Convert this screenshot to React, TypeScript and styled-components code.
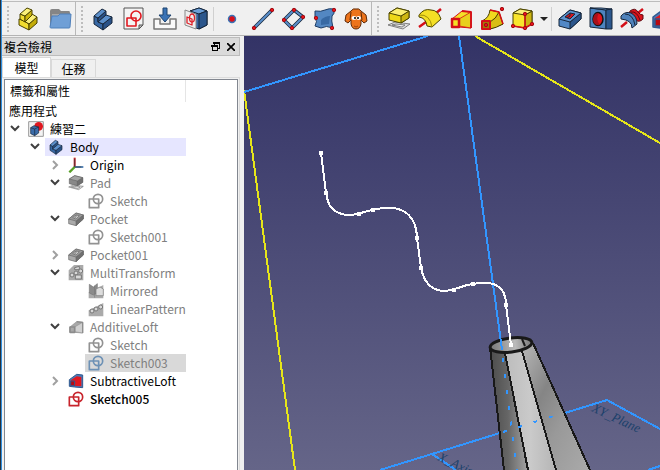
import React, { ReactNode } from 'react';
import styled, { createGlobalStyle } from 'styled-components';

const GlobalStyle = createGlobalStyle`
  * { box-sizing: border-box; }
  body { margin: 0; overflow: hidden; }
  button { font: inherit; color: inherit; border: 0; padding: 0; background: none; }
`;

const Window = styled.div`
  display: flex;
  flex-direction: column;
  height: 100vh;
  overflow: hidden;
  border-left: 1px solid #26313c;
  background: #f0f0f0;
  color: #000;
  font: 12px/18px "Noto Sans CJK TC", "Noto Sans", sans-serif;
`;

const Frame = styled.div`
  display: flex;
  flex-direction: column;
  flex: 1;
  min-height: 0;
  border-left: 1px solid #2f8fe0;
`;

const ToolbarArea = styled.header`
  display: flex;
  flex: none;
  height: 36px;
  padding-top: 1px;
  border-bottom: 1px solid #b4b4b4;
`;

const ToolGroup = styled.div<{ $last?: boolean }>`
  display: flex;
  align-items: center;
  flex: ${p => (p.$last ? '1' : 'none')};
  min-width: 0;
  overflow: hidden;
  border-top: 1px solid #bcbcbc;
  border-right: ${p => (p.$last ? '0' : '1px solid #b8b8b8')};
`;

const Grip = styled.span`
  flex: none;
  width: 2px;
  height: 26px;
  margin: 0 4px 0 5px;
  background: repeating-linear-gradient(#bdbdbd 0 2px, transparent 2px 4px);
`;

const ToolButton = styled.button`
  display: grid;
  place-items: center;
  flex: none;
  width: 31px;
  height: 30px;
`;

const MenuArrow = styled.button`
  display: grid;
  place-items: center;
  flex: none;
  width: 11px;
  height: 30px;
`;

const Separator = styled.span`
  flex: none;
  width: 1px;
  height: 24px;
  margin: 0 2px;
  background: #d0d0d0;
`;

const Workspace = styled.div`
  display: grid;
  grid-template-columns: 242px minmax(0, 1fr);
  flex: 1;
  min-height: 0;
`;

const Dock = styled.aside`
  display: flex;
  flex-direction: column;
  min-height: 0;
  padding: 1px 4px 0 0;
`;

const DockTitle = styled.div`
  display: flex;
  align-items: center;
  height: 19px;
  padding: 0 0 0 2px;
  border: 1px solid #bcbcbc;
  border-left: 0;
  background: #dadada;
`;

const DockName = styled.h1`
  flex: 1;
  margin: 0;
  font-size: 12px;
  font-weight: 400;
`;

const DockButton = styled.button`
  display: grid;
  place-items: center;
  width: 16px;
  height: 16px;
`;

const TabBar = styled.div`
  display: flex;
  align-items: flex-end;
  height: 21px;
`;

const Tab = styled.button<{ $active?: boolean }>`
  width: ${p => (p.$active ? '49px' : '45px')};
  height: ${p => (p.$active ? '20px' : '18px')};
  border: 1px solid #d9d9d9;
  border-bottom: 0;
  background: ${p => (p.$active ? '#fff' : '#f0f0f0')};
  line-height: 17px;
`;

const TabPage = styled.div`
  display: flex;
  flex: 1;
  min-height: 0;
  padding: 1px 1px 0 2px;
  border: 1px solid #dcdcdc;
  border-width: 1px 1px 0 0;
`;

const TreeView = styled.div`
  flex: 1;
  min-width: 0;
  overflow: hidden;
  border: 1px solid #828790;
  border-bottom: 0;
  background: #fff;
`;

const ColumnHeader = styled.div`
  width: 181px;
  height: 22px;
  padding-left: 5px;
  border-right: 1px solid #e5e5e5;
  line-height: 22px;
`;

const RootLabel = styled.div`
  height: 18px;
  padding-left: 4px;
`;

const Tree = styled.ul`
  width: 181px;
  margin: 0;
  padding: 0;
  list-style: none;
`;

const TreeRow = styled.li<{ $depth: number }>`
  display: flex;
  height: 18px;
  padding-left: ${p => p.$depth * 20}px;
`;

const Expander = styled.button`
  display: grid;
  place-items: center;
  flex: none;
  width: 20px;
  height: 18px;
`;

const Indent = styled.span`
  flex: none;
  width: 20px;
`;

type Tone = 'normal' | 'muted' | 'strong';
type Mark = 'none' | 'active' | 'selected';

const Item = styled.span<{ $tone: Tone; $mark: Mark }>`
  display: flex;
  align-items: center;
  flex: 1;
  gap: 6px;
  padding-left: 3px;
  white-space: nowrap;
  background: ${p => ({ none: 'transparent', active: '#e6e6ff', selected: '#d9d9d9' })[p.$mark]};
  color: ${p => (p.$tone === 'muted' ? '#808080' : '#000')};
  font-weight: ${p => (p.$tone === 'strong' ? 500 : 400)};
`;

const Viewport = styled.main`
  min-width: 0;
  min-height: 0;
  overflow: hidden;
  background: linear-gradient(#333366, #656588);
`;

const Scene = styled.svg`
  display: block;
  width: 100%;
  height: 100%;
`;

/* ---------- icons ---------- */

const Svg = ({ size = 24, children }: { size?: number; children: ReactNode }) => (
  <svg width={size} height={size} viewBox="0 0 24 24" strokeLinejoin="round" aria-hidden="true">
    {children}
  </svg>
);

const RED = '#d40f18';
const NAVY = '#16263b';

const PartIcon = () => (
  <Svg>
    <g stroke="#4a4300" strokeWidth="1">
      <path d="M2 12 7 14 12 17V23L2 18Z" fill="#f1dc30" />
      <path d="M12 17 20 10V16L12 23Z" fill="#c4ac08" />
      <path d="M7 14 15 7 20 10 12 17Z" fill="#fbf07a" />
      <path d="M3 7 8 9V15L3 12Z" fill="#f1dc30" />
      <path d="M8 9 15 3V8L8 15Z" fill="#cdb60f" />
      <path d="M3 7 10 1 15 3 8 9Z" fill="#fbf07a" />
    </g>
  </Svg>
);

const FolderIcon = () => (
  <Svg>
    <path d="M2 4Q2 2 4 2H11L13 4H21Q22 4 22 6V19H2Z" fill="#858585" />
    <path d="M4 7H21V18H4Z" fill="#a8a8a8" />
    <path d="M4 9H10L12 7H23L22 20Q22 21 21 21H3Q2 21 2 20Z" fill="#6f9fd6" stroke="#4f80bb" />
  </Svg>
);

const BodyIcon = ({ size = 24 }: { size?: number }) => (
  <Svg size={size}>
    <g stroke={NAVY} strokeWidth="1">
      <path d="M3 9 7 11V15L12 17V23L3 17Z" fill="#3767a3" />
      <path d="M7 11 15 4V8L7 15Z" fill="#2a5288" />
      <path d="M12 17 21 10V16L12 23Z" fill="#2a5288" />
      <path d="M7 15 15 8 21 10 12 17Z" fill="#5b8fcb" />
      <path d="M3 9 11 2 15 4 7 11Z" fill="#5b8fcb" />
    </g>
  </Svg>
);

const SketchShape = ({ color, width = 2 }: { color: string; width?: number }) => (
  <g fill="none" stroke={color} strokeWidth={width}>
    <path d="M2 9H16V22H2Z" /><circle cx="15" cy="9" r="7" />
  </g>
);

const NewSketchIcon = () => (
  <Svg>
    <path d="M2 1H21V18L17 22H2Z" fill="#f4f4f4" stroke="#555" />
    <path d="M21 18H17V22Z" fill="#bbb" stroke="#555" />
    <path d="M5 11H14V19H5Z" fill="none" stroke="#e01820" strokeWidth="1.600" />
    <circle cx="14" cy="9" r="5" fill="none" stroke="#e01820" strokeWidth="1.600" />
  </Svg>
);

const ImportIcon = () => (
  <Svg>
    <path d="M1 12H7V17H17V12H23V22H1Z" fill="#fafafa" stroke="#777" strokeWidth="1.500" />
    <path d="M10 1H14V8H18L12 15 6 8H10Z" fill="#3972b5" stroke="#1d436f" />
  </Svg>
);

const MapSketchIcon = () => (
  <Svg>
    <path d="M6 4 15 1 23 4V18L15 22 6 19Z" fill="#3465a4" stroke={NAVY} />
    <path d="M6 4 15 7 23 4 15 1Z" fill="#6b9ed7" stroke={NAVY} />
    <path d="M15 7 23 4V18L15 22Z" fill="#2b568c" stroke={NAVY} />
    <path d="M1 3 12 7V22L1 18Z" fill="#eee" stroke="#888" />
    <path d="M3 10 8 12V18L3 16Z" fill="none" stroke="#dd222a" strokeWidth="1.300" />
    <ellipse cx="8" cy="11" rx="2.500" ry="4" fill="none" stroke="#dd222a" strokeWidth="1.300" />
  </Svg>
);

const Dot = ({ x, y }: { x: number; y: number }) => (
  <circle cx={x} cy={y} r="1.700" fill="#e8111a" stroke="#a00d13" />
);

const PointIcon = () => (
  <Svg><circle cx="12" cy="12" r="3.500" fill="#d8101a" stroke="#3972b5" strokeWidth="1.500" /></Svg>
);

const LineIcon = () => (
  <Svg>
    <path d="M3 21 21 3" stroke={NAVY} strokeWidth="3.500" />
    <path d="M3 21 21 3" stroke="#5b90cc" strokeWidth="2" />
    <Dot x={3} y={21} /><Dot x={21} y={3} />
  </Svg>
);

const PlaneIcon = () => (
  <Svg>
    <path d="M2 13 12 3 21 10 10 21Z" fill="none" stroke={NAVY} strokeWidth="3.500" />
    <path d="M2 13 12 3 21 10 10 21Z" fill="none" stroke="#5b90cc" strokeWidth="2" />
    <Dot x={2} y={13} /><Dot x={12} y={3} /><Dot x={21} y={10} /><Dot x={10} y={21} />
  </Svg>
);

const BinderIcon = () => (
  <Svg>
    <path d="M2 4Q8 5 12 3T21 2Q22 7 19 9 18 13 20 21 13 18 8 21L2 19Q5 14 2 11Z" fill="#5387c2" stroke="#1a3b65" />
    <path d="M8 13Q12 9 17 9L16 17 8 18Z" fill="#24558f" opacity=".6" />
    <Dot x={21} y={3} /><Dot x={3} y={11} /><Dot x={19} y={21} />
  </Svg>
);

const CloneIcon = () => (
  <Svg>
    <path d="M7 4Q9 1 12 2 15 1 17 4L22 8 23 14 20 16 17 13 17 17Q16 22 12 22T7 17V13L4 16 1 14 2 8Z" fill="#ed741b" stroke="#5d2b0b" />
    <path d="M7 5 6 13M17 5 18 13" fill="none" stroke="#5d2b0b" />
    <ellipse cx="10" cy="11" rx="2.500" ry="2" fill="#fff" /><ellipse cx="14.500" cy="11" rx="2.500" ry="2" fill="#fff" />
    <circle cx="11" cy="11" r="1" /><circle cx="14" cy="11" r="1" />
    <path d="M10 19 12 20 14 19" fill="none" stroke="#a34408" />
  </Svg>
);

const PadShape = ({ c }: { c: [string, string, string, string] }) => (
  <>
    <path d="M1 18 8 15 23 17 16 22Z M5 18 9 17 18 18 15 20Z" fill="#ddd" stroke="#666" strokeWidth=".8" fillRule="evenodd" />
    <g stroke={c[3]}>
      <path d="M2 6V13L14 16 22 11V4L10 1Z" fill={c[1]} />
      <path d="M14 9 22 4V11L14 16Z" fill={c[2]} />
      <path d="M2 6 10 1 22 4 14 9Z" fill={c[0]} />
    </g>
  </>
);

const PadIcon = () => <Svg><PadShape c={['#fbee70', '#eed818', '#cdb510', '#4a4300']} /></Svg>;

const RevolutionIcon = () => (
  <Svg>
    <path d="M1 20 8 15M17 7 23 2" stroke={RED} strokeWidth="2.500" />
    <path d="M1 8Q6 1 13 3 20 3 23 12L14 20 9 19Q8 11 1 10Z" fill="#f4df25" stroke="#4a4300" />
    <path d="M1 8Q12 7 14 20" fill="none" stroke="#a18d0a" />
  </Svg>
);

const LoftShape = ({ fill, side, edge }: Record<'fill' | 'side' | 'edge', string>) => (
  <>
    <path d="M3 12 13 4 22 5V21L10 20 3 20Z" fill={fill} stroke={edge} strokeWidth="1" />
    <path d="M10 12 22 5V21L10 19Z" fill={side} stroke={edge} strokeWidth=".8" />
    <path d="M13 4 22 5V21" fill="none" stroke={edge} strokeWidth="1.800" />
    <path d="M3 12H10V20H3Z" fill={fill} stroke={edge} strokeWidth="2.500" />
  </>
);

const LoftIcon = () => <Svg><LoftShape fill="#f4df27" side="#e8d01d" edge={RED} /></Svg>;

const PipeIcon = () => (
  <Svg>
    <path d="M2 14Q9 11 10 3L19 5Q19 14 23 17L10 22 2 21Z" fill="#f1d91e" stroke="#463c00" />
    <path d="M10 15Q16 12 19 5L23 17Q16 21 10 22Z" fill="#d8bd14" stroke="#463c00" />
    <path d="M10 3 19 5 23 17" fill="none" stroke={RED} strokeWidth="1.500" />
    <path d="M2 14H10V22H2Z" fill="#a37b08" stroke={RED} strokeWidth="2" />
    <Dot x={6} y={18} /><Dot x={22} y={2} />
  </Svg>
);

const BoxIcon = () => (
  <Svg>
    <path d="M2 6 9 2 21 4V17L14 21 2 19Z" fill="#f8e52d" stroke="#4a4300" />
    <path d="M14 8 21 4V17L14 21Z" fill="#cdb510" stroke="#4a4300" />
    <path d="M2 6 14 8 21 4 9 2Z" fill="#faef78" stroke="#4a4300" />
    <path d="M2 19 14 21 21 17M14 21V7" fill="none" stroke={RED} strokeWidth="1.500" />
    <Dot x={2} y={19} /><Dot x={14} y={7} /><Dot x={14} y={21} /><Dot x={21} y={17} />
  </Svg>
);

const PocketShape = ({ c }: { c: [string, string, string, string, string] }) => (
  <g stroke={c[4]} strokeWidth="1">
    <path d="M1 12 12 3 23 6V12L12 22 1 19Z" fill={c[1]} />
    <path d="M12 15 23 6V12L12 22Z" fill={c[2]} />
    <path d="M1 12 12 3 23 6 12 15Z" fill={c[0]} />
    <path d="M7 10 12 6 17 7 12 12Z" fill={c[3]} />
    <path d="M12 6V9L9 11" fill="none" />
  </g>
);

const PocketIcon = () => <Svg><PocketShape c={['#5e93ce', '#5288c6', '#2b568c', '#d71520', NAVY]} /></Svg>;

const HoleIcon = () => (
  <Svg>
    <path d="M1 1 17 3V22L1 20Z" fill="#4d84c1" stroke={NAVY} />
    <path d="M1 1 12 1 23 2 17 3Z" fill="#6ca0d9" stroke={NAVY} />
    <path d="M17 3 23 2V22H17Z" fill="#2b568c" stroke={NAVY} />
    <ellipse cx="9" cy="12" rx="5" ry="6.500" fill="#e0141d" stroke="#111" strokeWidth="1.400" />
    <path d="M10 6Q6 12 11 18 4 19 4 12 5 5 10 6Z" fill="#a8101b" />
  </Svg>
);

const GrooveIcon = () => (
  <Svg>
    <path d="M1 20 7 15M18 6 23 2" stroke={RED} strokeWidth="2.500" />
    <path d="M10 4Q15 0 18 5 20 8 23 8V12Q19 16 16 13L9 7Z" fill="#d9131c" stroke="#5e0910" />
    <path d="M1 9Q5 4 11 6 17 9 17 17L12 21Q12 13 1 12Z" fill="#4f82bb" stroke={NAVY} />
    <path d="M5 7Q13 7 15 18" fill="none" stroke={NAVY} />
    <path d="M11 5Q17 4 20 13" fill="none" stroke="#5e0910" />
  </Svg>
);

const SubLoftIcon = ({ size = 24 }: { size?: number }) => (
  <Svg size={size}>
    <path d="M2 10 13 2 22 3V22L10 21 2 20Z" fill="#4d7ab5" stroke="#2f5990" strokeWidth="1.500" />
    <path d="M4 11 13 5 20 6V20L4 19Z" fill="#e01920" />
    <path d="M4 12H10V19H4Z" fill="#b80912" stroke="#31588f" strokeWidth="1.500" />
  </Svg>
);

const DocumentIcon = () => (
  <Svg size={16}>
    <path d="M1 1H23V23H1Z" fill="#f3f3f3" stroke="#999" strokeWidth="1.500" />
    <circle cx="16" cy="8" r="6.500" fill="#df1720" />
    <path d="M4 10 9 7 16 9V18L10 22 4 19Z" fill="#3b6ca9" stroke={NAVY} />
    <path d="M4 10 10 12 16 9M10 12V22" fill="none" stroke={NAVY} />
  </Svg>
);

const OriginIcon = () => (
  <Svg size={16}>
    <path d="M10 15V1" stroke="#bf2630" strokeWidth="3" />
    <path d="M10 15H23" stroke="#5a87b8" strokeWidth="3" />
    <path d="M10 15 2 23" stroke="#57a026" strokeWidth="3.500" />
    <path d="M10 3V15H20" fill="none" stroke="#333" />
  </Svg>
);

const SmallSketchIcon = ({ color }: { color: string }) => (
  <Svg size={16}><SketchShape color={color} width={2.5} /></Svg>
);
const GrayPadIcon = () => <Svg size={16}><PadShape c={['#a4a4a4', '#888', '#707070', '#666']} /></Svg>;
const GrayPocketIcon = () => <Svg size={16}><PocketShape c={['#9a9a9a', '#aaa', '#707070', '#ccc', '#686868']} /></Svg>;
const GrayLoftIcon = () => <Svg size={16}><LoftShape fill="#a8a8a8" side="#d0d0d0" edge="#8c8c8c" /></Svg>;

const TransformIcon = ({ kind }: { kind: 'multi' | 'mirror' | 'linear' }) => (
  <Svg size={16}>
    <path d={kind === 'multi' ? 'M1 8 9 0H23V23H1Z' : 'M1 14 15 7 23 3V23H1Z'} fill="#aaa" />
    {kind === 'mirror' ? (
      <g stroke="#777">
        <path d="M2 2 8 6 14 1V14L8 18 2 15Z" fill="#8b8b8b" />
        <path d="M12 9 18 6 23 9V19H12Z" fill="#ddd" />
        <path d="M10 4V22" />
      </g>
    ) : (
      <g stroke="#777" fill="#d8d8d8" strokeWidth="1.500">
        <circle cx="6" cy="15" r="3" /><circle cx="12" cy="12" r="3" /><circle cx="19" cy="9" r="3" />
        {kind === 'multi' && <path d="M11 15H20V21H11ZM10 4 17 2V7H10Z" />}
      </g>
    )}
  </Svg>
);

const Chevron = ({ open }: { open: boolean }) => (
  <svg width="10" height="10" viewBox="0 0 10 10" fill="none" strokeWidth="2" aria-hidden="true">
    {open ? <path d="M1 2 5 6 9 2" stroke="#404040" /> : <path d="M3 1 7 5 3 9" stroke="#a0a0a0" />}
  </svg>
);

/* ---------- data ---------- */

type Tool = [string, () => ReactNode];

const structureTools: Tool[] = [['Part', PartIcon], ['Group', FolderIcon]];
const bodyTools: Tool[] = [['Body', () => <BodyIcon />], ['New sketch', NewSketchIcon], ['Import', ImportIcon], ['Map sketch', MapSketchIcon]];
const datumTools: Tool[] = [['Point', PointIcon], ['Line', LineIcon], ['Plane', PlaneIcon], ['Shape binder', BinderIcon], ['Clone', CloneIcon]];
const additiveTools: Tool[] = [['Pad', PadIcon], ['Revolution', RevolutionIcon], ['Additive loft', LoftIcon], ['Additive pipe', PipeIcon], ['Additive box', BoxIcon]];
const subtractiveTools: Tool[] = [['Pocket', PocketIcon], ['Hole', HoleIcon], ['Groove', GrooveIcon], ['Subtractive loft', () => <SubLoftIcon />]];

const Tools = ({ items }: { items: Tool[] }) => (
  <>
    {items.map(([name, Icon]) => (
      <ToolButton key={name} type="button" aria-label={name}><Icon /></ToolButton>
    ))}
  </>
);

interface Node {
  depth: number;
  label: string;
  icon: ReactNode;
  open?: boolean;
  tone?: Tone;
  mark?: Mark;
}

const graySketch = <SmallSketchIcon color="#929292" />;

const nodes: Node[] = [
  { depth: 0, label: '練習二', icon: <DocumentIcon />, open: true },
  { depth: 1, label: 'Body', icon: <BodyIcon size={16} />, open: true, mark: 'active' },
  { depth: 2, label: 'Origin', icon: <OriginIcon />, open: false },
  { depth: 2, label: 'Pad', icon: <GrayPadIcon />, open: true, tone: 'muted' },
  { depth: 3, label: 'Sketch', icon: graySketch, tone: 'muted' },
  { depth: 2, label: 'Pocket', icon: <GrayPocketIcon />, open: true, tone: 'muted' },
  { depth: 3, label: 'Sketch001', icon: graySketch, tone: 'muted' },
  { depth: 2, label: 'Pocket001', icon: <GrayPocketIcon />, open: false, tone: 'muted' },
  { depth: 2, label: 'MultiTransform', icon: <TransformIcon kind="multi" />, open: true, tone: 'muted' },
  { depth: 3, label: 'Mirrored', icon: <TransformIcon kind="mirror" />, tone: 'muted' },
  { depth: 3, label: 'LinearPattern', icon: <TransformIcon kind="linear" />, tone: 'muted' },
  { depth: 2, label: 'AdditiveLoft', icon: <GrayLoftIcon />, open: true, tone: 'muted' },
  { depth: 3, label: 'Sketch', icon: graySketch, tone: 'muted' },
  { depth: 3, label: 'Sketch003', icon: <SmallSketchIcon color="#6d91b5" />, tone: 'muted', mark: 'selected' },
  { depth: 2, label: 'SubtractiveLoft', icon: <SubLoftIcon size={16} />, open: false },
  { depth: 2, label: 'Sketch005', icon: <SmallSketchIcon color="#c8242c" />, tone: 'strong' },
];

const pathVertices = [[77, 117], [82, 157], [115, 178], [129, 174], [173, 202], [177, 232], [210, 254], [229, 248], [262, 269], [267, 309]];

const ModelScene = () => (
  <Scene role="img" aria-label="3D">
    <defs>
      <linearGradient id="left" x1="0" y1="0" x2="1" y2="0">
        <stop offset="0" stopColor="#4c4c4c" /><stop offset=".45" stopColor="#666" /><stop offset="1" stopColor="#aaa" />
      </linearGradient>
      <linearGradient id="middle" x1="0" y1="0" x2="1" y2="0">
        <stop offset="0" stopColor="#bcbcbc" /><stop offset=".5" stopColor="#cacaca" /><stop offset="1" stopColor="#b5b5b5" />
      </linearGradient>
      <linearGradient id="right" x1="0" y1="0" x2="1" y2="1">
        <stop offset="0" stopColor="#b8b8b8" /><stop offset=".35" stopColor="#858585" /><stop offset=".6" stopColor="#999" /><stop offset="1" stopColor="#aaa" />
      </linearGradient>
      <linearGradient id="bore">
        <stop offset="0" stopColor="#777" /><stop offset=".6" stopColor="#bbb" /><stop offset="1" stopColor="#777" />
      </linearGradient>
    </defs>
    <g fill="none" strokeWidth="2" shapeRendering="crispEdges">
      <path d="M0 54 51 434M231 0 416 107" stroke="#e6e619" />
      <path d="M0 56 184 0M215 0 259 321M136 434 363 364 416 393M188 418 212 434M404 434 416 430" stroke="#3296ff" />
    </g>
    <g fill="#1c416b" fontFamily="Liberation Serif" fontStyle="italic" fontSize="13">
      <text transform="translate(347 375) rotate(25)">XY_Plane</text>
      <text transform="translate(193 424) rotate(25)">X_Axis</text>
    </g>
    <path d="M246 311 260 434H286L261 317Z" fill="url(#left)" />
    <path d="M261 317 284 434H312L278 315Z" fill="url(#middle)" />
    <path d="M278 315 312 434H346L289 307Z" fill="url(#right)" />
    <g stroke="#191919" strokeWidth="2" fill="none" shapeRendering="crispEdges">
      <path d="M246 311 260 434M261 317 284 434M278 315 312 434M289 307 346 434" />
    </g>
    <ellipse cx="267" cy="309" rx="21" ry="7" transform="rotate(-7 267 309)" fill="url(#bore)" stroke="#191919" strokeWidth="3" />
    <path d="M278 303 281 310" stroke="#191919" strokeWidth="2" />
    <g fill="none" shapeRendering="crispEdges" stroke="#3296ff" strokeWidth="2">
      <path d="M253 277 258 314" />
      <path d="M259 322 273 434" strokeDasharray="4 12" />
      <path d="M259 396 316 378" strokeDasharray="4 12" />
    </g>
    <g shapeRendering="crispEdges">
      <path d="M77 117 82 157C84 168 86 176 102 179 112 180 120 175 129 174 151 168 172 173 173 202L177 232C180 247 187 254 199 255 211 255 218 249 229 248 250 244 262 250 262 269L267 309" fill="none" stroke="#fff" strokeWidth="2" />
      {pathVertices.map(([x, y]) => <rect key={`${x}-${y}`} x={x - 2} y={y - 2} width="4" height="4" fill="#fff" />)}
    </g>
  </Scene>
);

export default function App() {
  return (
    <Window>
      <GlobalStyle />
      <Frame>
        <ToolbarArea>
          <ToolGroup role="toolbar"><Grip /><Tools items={structureTools} /></ToolGroup>
          <ToolGroup role="toolbar"><Grip /><Tools items={bodyTools} /><Separator /><Tools items={datumTools} /></ToolGroup>
          <ToolGroup role="toolbar" $last>
            <Grip /><Tools items={additiveTools} />
            <MenuArrow type="button" aria-label="More">
              <svg width="8" height="4" viewBox="0 0 8 4" aria-hidden="true"><path d="M0 0H8L4 4Z" fill="#222" /></svg>
            </MenuArrow>
            <Separator /><Tools items={subtractiveTools} />
          </ToolGroup>
        </ToolbarArea>
        <Workspace>
          <Dock>
            <DockTitle>
              <DockName>複合檢視</DockName>
              <DockButton type="button" aria-label="Float">
                <svg width="9" height="9" viewBox="0 0 9 9" fill="none" stroke="#000" shapeRendering="crispEdges" aria-hidden="true">
                  <path d="M3 3V1H8V6H6M3 1H8M1 4H6V8H1Z" /><path d="M2 1H9M0 4H7" strokeWidth="2" />
                </svg>
              </DockButton>
              <DockButton type="button" aria-label="Close">
                <svg width="8" height="8" viewBox="0 0 8 8" stroke="#000" strokeWidth="1.700" aria-hidden="true"><path d="M0 0 8 8M8 0 0 8" /></svg>
              </DockButton>
            </DockTitle>
            <TabBar role="tablist">
              <Tab type="button" role="tab" aria-selected="true" $active>模型</Tab>
              <Tab type="button" role="tab" aria-selected="false">任務</Tab>
            </TabBar>
            <TabPage role="tabpanel">
              <TreeView>
                <ColumnHeader>標籤和屬性</ColumnHeader>
                <RootLabel>應用程式</RootLabel>
                <Tree role="tree">
                  {nodes.map((n, i) => (
                    <TreeRow key={i} $depth={n.depth} role="treeitem" aria-level={n.depth + 1} aria-expanded={n.open}>
                      {n.open === undefined ? <Indent /> : (
                        <Expander type="button" aria-label={n.label}><Chevron open={n.open} /></Expander>
                      )}
                      <Item $tone={n.tone ?? 'normal'} $mark={n.mark ?? 'none'}>{n.icon}{n.label}</Item>
                    </TreeRow>
                  ))}
                </Tree>
              </TreeView>
            </TabPage>
          </Dock>
          <Viewport><ModelScene /></Viewport>
        </Workspace>
      </Frame>
    </Window>
  );
}
